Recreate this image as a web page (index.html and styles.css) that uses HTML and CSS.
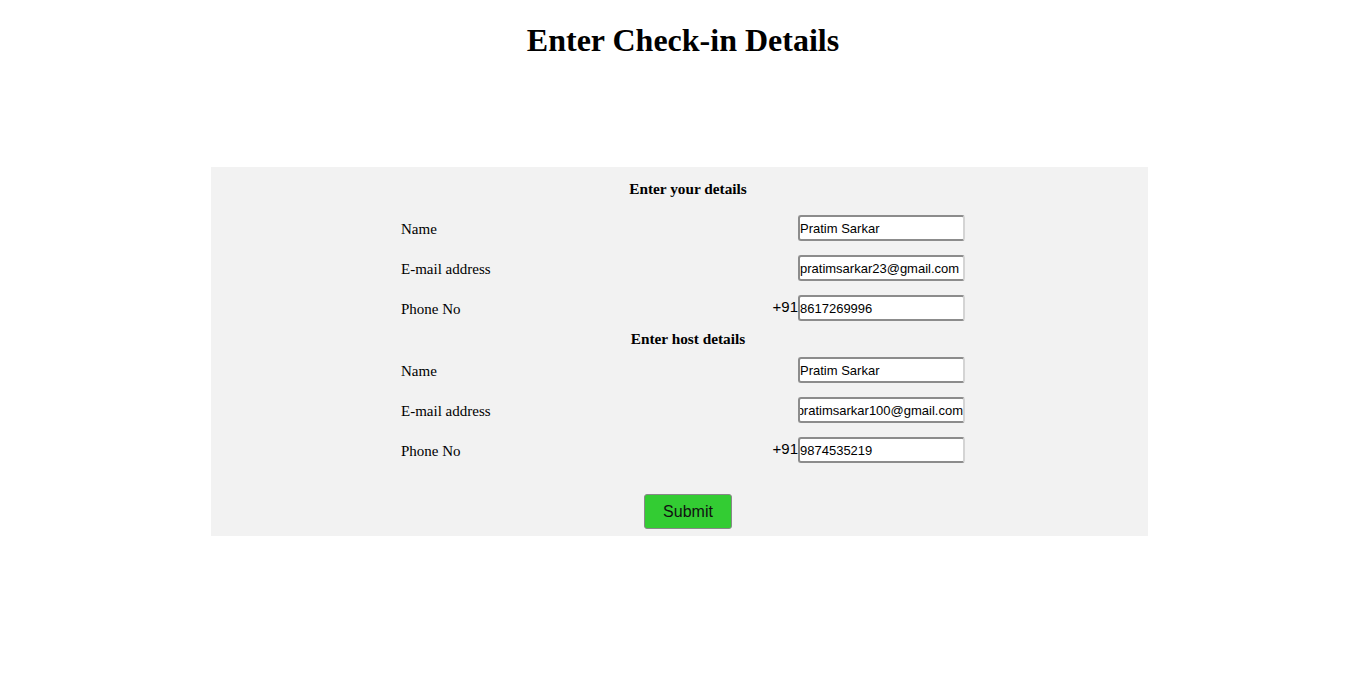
FILE: index.html
```html
<!DOCTYPE html>
<html lang="en">
<head>
<meta charset="utf-8">
<title>Check-in</title>
<link rel="stylesheet" href="styles.css">
</head>
<body>
<h1 class="title">Enter Check-in Details</h1>
<form class="panel">
  <div class="section-title">Enter your details</div>
  <div class="row">
    <span class="label">Name</span>
    <span class="field"><input class="inp" type="text" value="Pratim Sarkar"></span>
  </div>
  <div class="row">
    <span class="label">E-mail address</span>
    <span class="field"><input class="inp" type="text" value="pratimsarkar23@gmail.com"></span>
  </div>
  <div class="row">
    <span class="label">Phone No</span>
    <span class="field"><span class="code">+91</span><input class="inp" type="text" value="8617269996"></span>
  </div>
  <div class="section-title host">Enter host details</div>
  <div class="row">
    <span class="label">Name</span>
    <span class="field"><input class="inp" type="text" value="Pratim Sarkar"></span>
  </div>
  <div class="row">
    <span class="label">E-mail address</span>
    <span class="field"><input class="inp scrolled" type="text" value="pratimsarkar100@gmail.com"></span>
  </div>
  <div class="row">
    <span class="label">Phone No</span>
    <span class="field"><span class="code">+91</span><input class="inp" type="text" value="9874535219"></span>
  </div>
  <div class="actions">
    <button class="submit" type="button">Submit</button>
  </div>
</form>
</body>
</html>
```

FILE: styles.css
```css
body {
  margin: 8px;
  font-family: "Liberation Serif", "Times New Roman", serif;
  color: #000;
  background: #fff;
}

.title {
  margin: 14px 0 0;
  font-size: 32px;
  font-weight: bold;
  text-align: center;
  line-height: 37px;
}

.panel {
  margin: 108px 0 0 203px;
  width: 937px;
  box-sizing: border-box;
  background: #f2f2f2;
  padding: 10px 173px 7px 190px;
}

.section-title {
  height: 24px;
  line-height: 24px;
  font-size: 15.3px;
  font-weight: bold;
  text-align: center;
  margin-bottom: 7px;
}

.section-title.host {
  height: 22px;
  line-height: 22px;
  margin-bottom: 0;
}

.row {
  display: flex;
  align-items: center;
  justify-content: space-between;
  height: 40px;
  padding-right: 10px;
  font-size: 15px;
}

.label {
  padding-top: 2px;
}

.field {
  display: flex;
  align-items: center;
}

.code {
  font-family: "Liberation Sans", Arial, sans-serif;
  font-size: 15px;
  margin-bottom: 3px;
}

.inp {
  box-sizing: border-box;
  width: 167px;
  height: 26px;
  margin: 0;
  padding: 0;
  font-family: "Liberation Sans", Arial, sans-serif;
  font-size: 13px;
  color: #000;
  background: #fff;
  border-style: solid;
  border-width: 2px;
  border-color: #8c8c8c #d4d4d4 #8c8c8c #8c8c8c;
  border-radius: 3px;
  outline: none;
}

.scrolled {
  direction: rtl;
}

.actions {
  display: flex;
  justify-content: center;
  margin-top: 24px;
}

.submit {
  box-sizing: border-box;
  width: 88px;
  height: 35px;
  background: #33cc33;
  border: 1px solid #888;
  border-radius: 3px;
  font-family: "Liberation Sans", Arial, sans-serif;
  font-size: 16px;
  color: #111;
  padding: 0;
}
```
